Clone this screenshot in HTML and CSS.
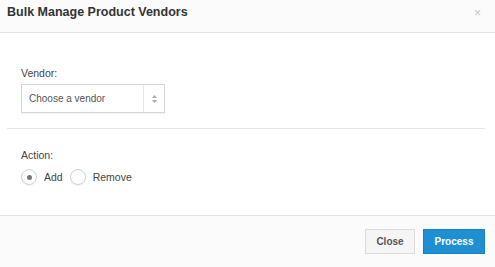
FILE: index.html
```html
<!DOCTYPE html>
<html lang="en">

<head>
    <meta charset="UTF-8">
    <meta name="viewport" content="width=device-width, initial-scale=1.0">
    <title>Bulk Manage Product Vendors</title>
    <link rel="stylesheet" href="styles.css">
</head>

<body>
    <div class="modal">
        <!-- Header -->
        <div class="modal-header">
            <h3>Bulk Manage Product Vendors</h3>
            <span class="close-x">&times;</span>
        </div>
        <!-- Body -->
        <div class="modal-body">
            <div class="field">
                <label class="field-label">Vendor:</label>
                <div class="select-box">
                    <span class="select-text">Choose a vendor</span>
                    <span class="select-arrows">
                        <svg width="5" height="8" viewBox="0 0 5 8">
                            <path d="M2.5 0 L5 3 L0 3 Z" fill="#aaa"/>
                            <path d="M0 5 L5 5 L2.5 8 Z" fill="#aaa"/>
                        </svg>
                    </span>
                </div>
            </div>
            <hr class="divider">
            <div class="field">
                <label class="field-label">Action:</label>
                <div class="radios">
                    <label class="radio"><span class="radio-dot checked"></span>Add</label>
                    <label class="radio"><span class="radio-dot"></span>Remove</label>
                </div>
            </div>
        </div>
        <!-- Footer -->
        <div class="modal-footer">
            <button class="btn">Close</button>
            <button class="btn btn-primary">Process</button>
        </div>
    </div>
</body>

</html>
```

FILE: styles.css
```css
body {
    font-family: "Liberation Sans", Arial, sans-serif;
    margin: 0;
    padding: 0;
    background: #fff;
    color: #333;
}

.modal {
    width: 495px;
    height: 267px;
    display: flex;
    flex-direction: column;
}

.modal-header {
    height: 32px;
    background: #fcfbfc;
    border-bottom: 1px solid #e2e2e2;
    display: flex;
    align-items: center;
    justify-content: space-between;
    padding: 0 14px 0 7px;
}

.modal-header h3 {
    margin: 0;
    font-size: 12.5px;
    font-weight: bold;
    color: #333;
    position: relative;
    top: -4px;
}

.close-x {
    color: #c4c4c4;
    font-size: 12px;
    position: relative;
    top: -3px;
}

.modal-body {
    flex: 1;
    padding: 0 10px 0 7px;
}

.field {
    padding-left: 14px;
}

.field-label {
    display: block;
    font-size: 10.5px;
    line-height: 14px;
    color: #444;
}

.modal-body .field:first-child {
    padding-top: 33px;
}

.modal-body .field:first-child .field-label {
    margin-bottom: 4px;
}

.select-box {
    width: 142px;
    height: 27px;
    border: 1px solid #d6d6d6;
    display: flex;
    align-items: center;
    justify-content: space-between;
    background: #fff;
    box-shadow: 0 1px 1px rgba(0, 0, 0, 0.04);
}

.select-text {
    font-size: 10px;
    color: #555;
    padding-left: 7px;
}

.select-arrows {
    width: 20px;
    height: 27px;
    border-left: 1px solid #e8e8e8;
    display: flex;
    align-items: center;
    justify-content: center;
}

.divider {
    border: none;
    border-top: 1px solid #e6e6e6;
    margin: 15px 0 0 0;
}

.modal-body .field:last-child {
    padding-top: 19px;
}

.radios {
    display: flex;
    align-items: center;
    margin-top: 7px;
}

.radio {
    display: flex;
    align-items: center;
    font-size: 10.5px;
    color: #444;
    margin-right: 7px;
}

.radio-dot {
    width: 14px;
    height: 14px;
    border: 1px solid #d0d0d0;
    border-radius: 50%;
    margin-right: 7px;
    display: flex;
    align-items: center;
    justify-content: center;
    box-shadow: 0 1px 1px rgba(0, 0, 0, 0.06);
}

.radio-dot.checked::after {
    content: "";
    width: 5px;
    height: 5px;
    border-radius: 50%;
    background: #777;
}

.modal-footer {
    height: 51px;
    background: #fcfbfc;
    border-top: 1px solid #e2e2e2;
    display: flex;
    align-items: center;
    justify-content: flex-end;
    padding: 0 10px 0 0;
    gap: 8px;
}

.btn {
    font-family: "Liberation Sans", Arial, sans-serif;
    font-size: 10px;
    font-weight: bold;
    width: 50px;
    height: 25px;
    padding: 0;
    border: 1px solid #dcdcdc;
    background: #f5f5f5;
    color: #555;
    cursor: pointer;
}

.btn-primary {
    width: 62px;
    background: #1e8fd2;
    border-color: #1a80c0;
    color: #fff;
}
```
